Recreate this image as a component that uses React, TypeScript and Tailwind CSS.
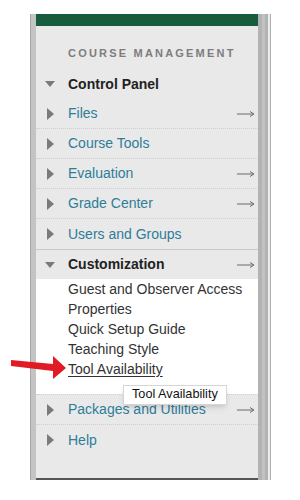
import React from 'react';

type Item = { label: string; arrow?: boolean };

const topItems: Item[] = [
  { label: 'Files', arrow: true },
  { label: 'Course Tools' },
  { label: 'Evaluation', arrow: true },
  { label: 'Grade Center', arrow: true },
  { label: 'Users and Groups' },
];

const subItems = ['Guest and Observer Access', 'Properties', 'Quick Setup Guide', 'Teaching Style'];

const RightTri = () => (
  <svg width="7" height="12" viewBox="0 0 7 12" className="shrink-0">
    <polygon points="0,0 7,6 0,12" fill="#7a7a7a" />
  </svg>
);

const DownTri = () => (
  <svg width="10" height="6" viewBox="0 0 10 6" className="shrink-0">
    <polygon points="0,0 10,0 5,6" fill="#7a7a7a" />
  </svg>
);

const LongArrow = () => (
  <svg width="18" height="8" viewBox="0 0 18 8" className="shrink-0">
    <line x1="0" y1="4" x2="16" y2="4" stroke="#6b6b6b" strokeWidth="1" />
    <path d="M13 1.5 L17 4 L13 6.5" fill="none" stroke="#6b6b6b" strokeWidth="1" />
  </svg>
);

const Row = ({ item, last }: { item: Item; last?: boolean }) => (
  <div
    className={`h-[30px] flex items-center pl-[11px] pr-[3px] ${
      last ? '' : 'border-b border-dotted border-[#cfcfcf]'
    }`}
  >
    <RightTri />
    <span className="ml-[14px] flex-1 text-[14px] text-[#2e7d99]">{item.label}</span>
    {item.arrow && <LongArrow />}
  </div>
);

const App: React.FC = () => {
  return (
    <div className="relative w-[300px] h-[500px] bg-white overflow-hidden font-['Liberation_Sans',Arial,sans-serif]">
      <div className="ml-[30px] mt-[14px] w-[241px] h-[466px] flex">
        {/* left frame */}
        <div className="w-[6px] bg-[#c4c4c4] border-l border-[#a8a8a8]" />

        {/* panel */}
        <div className="w-[222px] flex flex-col bg-[#e9e9e9] border-b-2 border-[#555]">
          <div className="h-[12px] bg-[#175d3d]" />

          <div className="pt-[20px] pl-[32px] text-[11px] leading-[14px] font-bold tracking-[0.2em] text-[#7d7d7d]">
            COURSE MANAGEMENT
          </div>

          <div className="mt-[9px] h-[30px] flex items-center pl-[9px]">
            <DownTri />
            <span className="ml-[13px] text-[14px] font-bold text-[#222]">Control Panel</span>
          </div>

          {topItems.map((it, i) => (
            <Row key={it.label} item={it} last={i === topItems.length - 1} />
          ))}

          <div className="border-t border-[#c8c8c8] h-[30px] flex items-center pl-[9px] pr-[3px]">
            <DownTri />
            <span className="ml-[13px] flex-1 text-[14px] font-bold text-[#222]">Customization</span>
            <LongArrow />
          </div>

          <div className="bg-white pb-[15px] pl-[32px]">
            {subItems.map(s => (
              <div key={s} className="h-[20px] flex items-center text-[14px] text-[#333]">
                {s}
              </div>
            ))}
            <div className="h-[20px] flex items-center text-[14px] text-[#333]">
              <span className="underline underline-offset-2">Tool Availability</span>
            </div>
          </div>

          <div className="border-t border-dotted border-[#cfcfcf]">
            <Row item={{ label: 'Packages and Utilities', arrow: true }} />
            <Row item={{ label: 'Help' }} last />
          </div>
        </div>

        {/* right frame */}
        <div className="w-[10px] bg-[#b3b3b3] flex justify-center">
          <div className="w-[3px] bg-[#c2c2c2]" />
        </div>
        <div className="w-[2px] bg-[#ececec]" />
        <div className="w-[1px] bg-[#b0b0b0]" />
      </div>

      {/* tooltip */}
      <div className="absolute left-[123px] top-[385px] h-[20px] px-[8px] flex items-center bg-white border border-[#d6d6d6] shadow-md text-[12.7px] text-[#111]">
        Tool Availability
      </div>

      {/* red annotation arrow */}
      <svg className="absolute left-0 top-[350px]" width="70" height="35" viewBox="0 0 70 35">
        <polygon points="11,10 53,14 53,6 66,18 53,29 53,21 11,16" fill="#e01b24" />
      </svg>
    </div>
  );
};

export default App;
